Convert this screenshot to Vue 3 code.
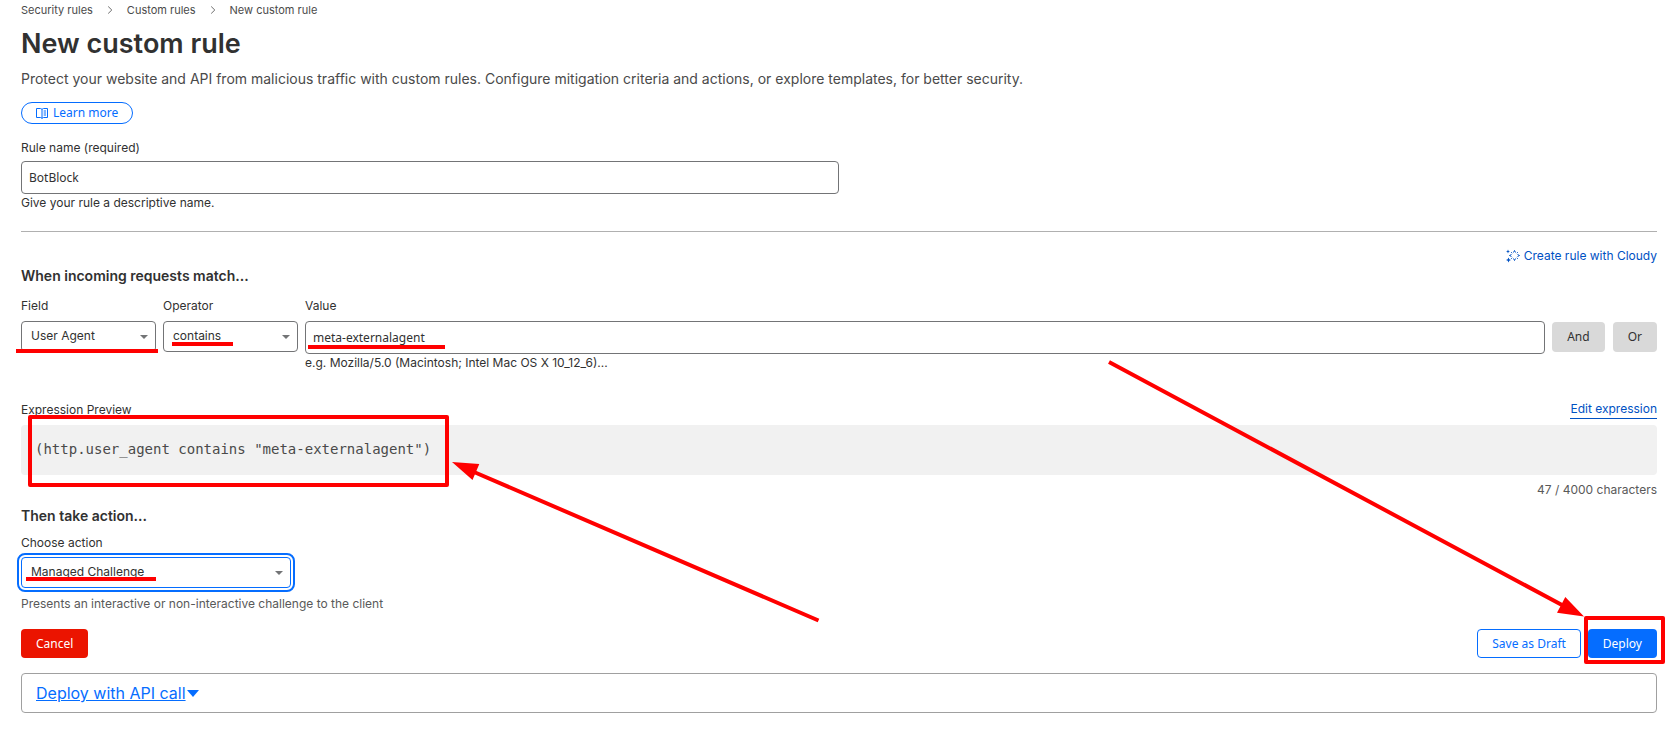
<script setup>
import { ref } from 'vue'

const ruleName = ref('BotBlock')
const field = ref('User Agent')
const operator = ref('contains')
const value = ref('meta-externalagent')
const action = ref('Managed Challenge')
</script>

<template>
  <main class="page">
    <nav class="crumbs" aria-label="Breadcrumb">
      <a href="#">Security rules</a>
      <svg class="chevron" viewBox="0 0 6 8" aria-hidden="true"><path d="M1.2.5 4.8 4 1.2 7.5" /></svg>
      <a href="#">Custom rules</a>
      <svg class="chevron" viewBox="0 0 6 8" aria-hidden="true"><path d="M1.2.5 4.8 4 1.2 7.5" /></svg>
      <a href="#" aria-current="page">New custom rule</a>
    </nav>

    <h1>New custom rule</h1>
    <p class="intro">Protect your website and API from malicious traffic with custom rules. Configure mitigation criteria and actions, or explore templates, for better security.</p>

    <a class="learn" href="#">
      <svg viewBox="0 0 12 12" aria-hidden="true">
        <path d="M.5 1.500h4L6 2.300l1.500-.8h4v9h-4L6 11.300 4.500 10.500h-4zM6 2.300v9M7.700 4h2.300M7.700 6h2.300M7.700 8h2.300" />
      </svg>
      Learn more
    </a>

    <section class="name">
      <label for="rule-name">Rule name (required)</label>
      <input id="rule-name" v-model="ruleName" type="text" aria-describedby="name-help">
      <p id="name-help" class="help">Give your rule a descriptive name.</p>
    </section>

    <hr>

    <div class="cloudy">
      <a href="#">
        <svg viewBox="0 0 14 14" aria-hidden="true">
          <path class="rays" d="M8.500 1.500l1 2M8.500 1.500l-1 2M13.500 6.500l-2 1M13.500 6.500l-2-1M8.500 11.500l1-2M8.500 11.500l-1-2M3.500 6.500l2 1M3.500 6.500l2-1M5.200 3.200l1 1M11.800 3.200l-1 1M5.200 9.800l1-1M11.800 9.800l-1-1" />
          <path class="spark" d="M2 .5 2.600 1.900 4 2.500 2.600 3.100 2 4.500 1.400 3.100 0 2.500 1.400 1.900zM2.500 8.500l.8 1.700 1.700.8-1.700.8-.8 1.700-.8-1.700L0 11l1.700-.8z" />
        </svg>
        Create rule with Cloudy
      </a>
    </div>

    <h2>When incoming requests match...</h2>

    <section class="conditions">
      <div class="control">
        <label for="field">Field</label>
        <div class="select">
          <select id="field" v-model="field"><option>User Agent</option></select>
          <svg viewBox="0 0 8 4" aria-hidden="true"><path d="M0 0h8L4 4z" /></svg>
        </div>
      </div>
      <div class="control">
        <label for="operator">Operator</label>
        <div class="select">
          <select id="operator" v-model="operator"><option>contains</option></select>
          <svg viewBox="0 0 8 4" aria-hidden="true"><path d="M0 0h8L4 4z" /></svg>
        </div>
      </div>
      <div class="control">
        <label for="value">Value</label>
        <input id="value" v-model="value" type="text" aria-describedby="value-help">
        <p id="value-help" class="help">e.g. Mozilla/5.0 (Macintosh; Intel Mac OS X 10_12_6)...</p>
      </div>
      <div class="joins">
        <button type="button">And</button>
        <button type="button">Or</button>
      </div>
    </section>

    <section class="preview">
      <div class="preview-head">
        <span>Expression Preview</span>
        <a href="#">Edit expression</a>
      </div>
      <pre>(http.user_agent contains "meta-externalagent")</pre>
      <p class="count">47 / 4000 characters</p>
    </section>

    <h2>Then take action...</h2>

    <section class="action">
      <label for="action">Choose action</label>
      <div class="select active">
        <select id="action" v-model="action"><option>Managed Challenge</option></select>
        <svg viewBox="0 0 8 4" aria-hidden="true"><path d="M0 0h8L4 4z" /></svg>
      </div>
      <p class="note">Presents an interactive or non-interactive challenge to the client</p>
    </section>

    <footer class="buttons">
      <button type="button" class="danger">Cancel</button>
      <div class="submit">
        <button type="button" class="outline">Save as Draft</button>
        <button type="button" class="primary">Deploy</button>
      </div>
    </footer>

    <div class="api">
      <a href="#"><span>Deploy with API call</span><svg viewBox="0 0 12 7" aria-hidden="true"><path d="M0 0h12L6 7z" /></svg></a>
    </div>

    <svg class="marks" width="1675" height="739" aria-hidden="true">
      <path d="M16 351h142M172 344h61M308 347h137M26 579h130" />
      <rect x="30" y="417" width="417" height="68" />
      <rect x="1586" y="618" width="77" height="44" />
      <path d="M818.500 620.500 474 472M1109 362l453 243" />
      <path class="head" d="M452 462l27.300 2L472.500 480zM1584 616.500l-18.700-19.500L1557 612.700z" />
    </svg>
  </main>
</template>

<style>
body {
  margin: 0;
  background: #fff;
}
</style>

<style scoped>
.page {
  position: relative;
  padding: 0 18px 24px 21px;
  color: #313131;
  font: 12px/20px Inter, "Open Sans", sans-serif;
  overflow: hidden;
}

.page * {
  box-sizing: border-box;
}

h1, h2, p, pre {
  margin: 0;
}

a {
  color: #0051c3;
  text-decoration: none;
}

.crumbs {
  display: flex;
  align-items: center;
  height: 20px;
  font-size: 11px;
}

.crumbs a {
  color: #4a4a4a;
}

.chevron {
  width: 6px;
  height: 8px;
  margin: 0 14px;
  fill: none;
  stroke: #6b6b6b;
}

h1 {
  margin-top: 6px;
  font-size: 27px;
  line-height: 36px;
  font-weight: 600;
}

.intro {
  margin-top: 5px;
  color: #4a4a4a;
  font-size: 14px;
  line-height: 24px;
}

.learn {
  display: flex;
  align-items: center;
  gap: 5px;
  width: max-content;
  height: 22px;
  margin-top: 11px;
  padding: 0 14px;
  border: 1px solid #056dff;
  border-radius: 11px;
  color: #056dff;
  font-family: "Noto Sans", sans-serif;
}

.learn svg {
  width: 12px;
  height: 12px;
  fill: none;
  stroke: currentColor;
}

.name {
  width: 50%;
  max-width: 818px;
  margin-top: 14px;
}

label {
  display: block;
  margin-bottom: 5px;
}

input {
  display: block;
  width: 100%;
  height: 33px;
  padding: 0 7px;
  border: 1px solid #737476;
  border-radius: 4px;
  background: #fff;
  color: #313131;
  font: 12px/20px "Noto Sans", sans-serif;
}

.name label {
  margin-bottom: 3px;
}

.help {
  line-height: 18px;
}

hr {
  height: 1px;
  margin: 19px 0 0;
  border: 0;
  background: #b0b0b0;
}

.cloudy {
  display: flex;
  justify-content: flex-end;
  margin-top: 14px;
}

.cloudy a {
  display: flex;
  align-items: center;
  gap: 4px;
}

.cloudy svg {
  width: 14px;
  height: 14px;
}

.rays {
  fill: none;
  stroke: currentColor;
}

.spark {
  fill: currentColor;
}

h2 {
  font-size: 14px;
  line-height: 20px;
  font-weight: 600;
}

.conditions {
  display: grid;
  grid-template-columns: 135px 135px 1fr auto;
  gap: 7px;
  margin-top: 10px;
}

.select {
  display: grid;
  align-items: center;
}

.select > * {
  grid-area: 1 / 1;
}

.select svg {
  justify-self: end;
  width: 8px;
  height: 4px;
  margin-right: 8px;
  fill: #737476;
  pointer-events: none;
}

select {
  width: 100%;
  height: 31px;
  padding: 0 24px 2px 9px;
  border: 1px solid #737476;
  border-radius: 4px;
  appearance: none;
  background: #fff;
  color: #313131;
  font: 12px/20px Inter, sans-serif;
}

.joins {
  display: flex;
  gap: 8px;
  padding-top: 26px;
}

button {
  height: 29px;
  padding: 0 15px;
  border: 0;
  border-radius: 4px;
  font: 12px/20px "Noto Sans", sans-serif;
}

.joins button {
  height: 30px;
  background: #d9d9d9;
  color: #313131;
}

.preview {
  margin-top: 28px;
}

.preview-head {
  display: flex;
  justify-content: space-between;
  align-items: flex-start;
}

.preview-head a {
  line-height: 18px;
  border-bottom: 1px solid #0051c3;
}

pre {
  margin-top: 5px;
  padding: 14px 14px 16px;
  border-radius: 4px;
  background: #f1f1f1;
  color: #4a4a4a;
  font: 14px/20px "DejaVu Sans Mono", monospace;
}

.count {
  margin: 5px 0 6px;
  color: #595959;
  text-align: right;
}

.action {
  margin-top: 7px;
}

.action label {
  margin-bottom: 4px;
}

.active {
  width: 270px;
  border-radius: 4px;
  outline: 2px solid #056dff;
  outline-offset: 2px;
}

.active select {
  border-color: #056dff;
}

.note {
  margin-top: 6px;
  color: #595959;
}

.buttons {
  display: flex;
  justify-content: space-between;
  margin-top: 15px;
}

.submit {
  display: flex;
  gap: 7px;
}

.danger {
  background: #eb1400;
  color: #fff;
}

.primary {
  background: #056dff;
  color: #fff;
}

.outline {
  padding: 0 14px;
  border: 1px solid #056dff;
  background: #fff;
  color: #056dff;
}

.api {
  margin-top: 15px;
  padding: 9px 14px;
  border: 1px solid #a0a0a0;
  border-radius: 4px;
  font-size: 16px;
}

.api a {
  display: flex;
  align-items: center;
  color: #056dff;
}

.api span {
  text-decoration: underline;
}

.api svg {
  width: 12px;
  height: 7px;
  margin-left: 1px;
  fill: currentColor;
}

.marks {
  position: absolute;
  top: 0;
  left: 0;
  fill: none;
  stroke: #f00;
  stroke-width: 4;
  stroke-linejoin: round;
  pointer-events: none;
}

.head {
  fill: #f00;
  stroke: none;
}
</style>
